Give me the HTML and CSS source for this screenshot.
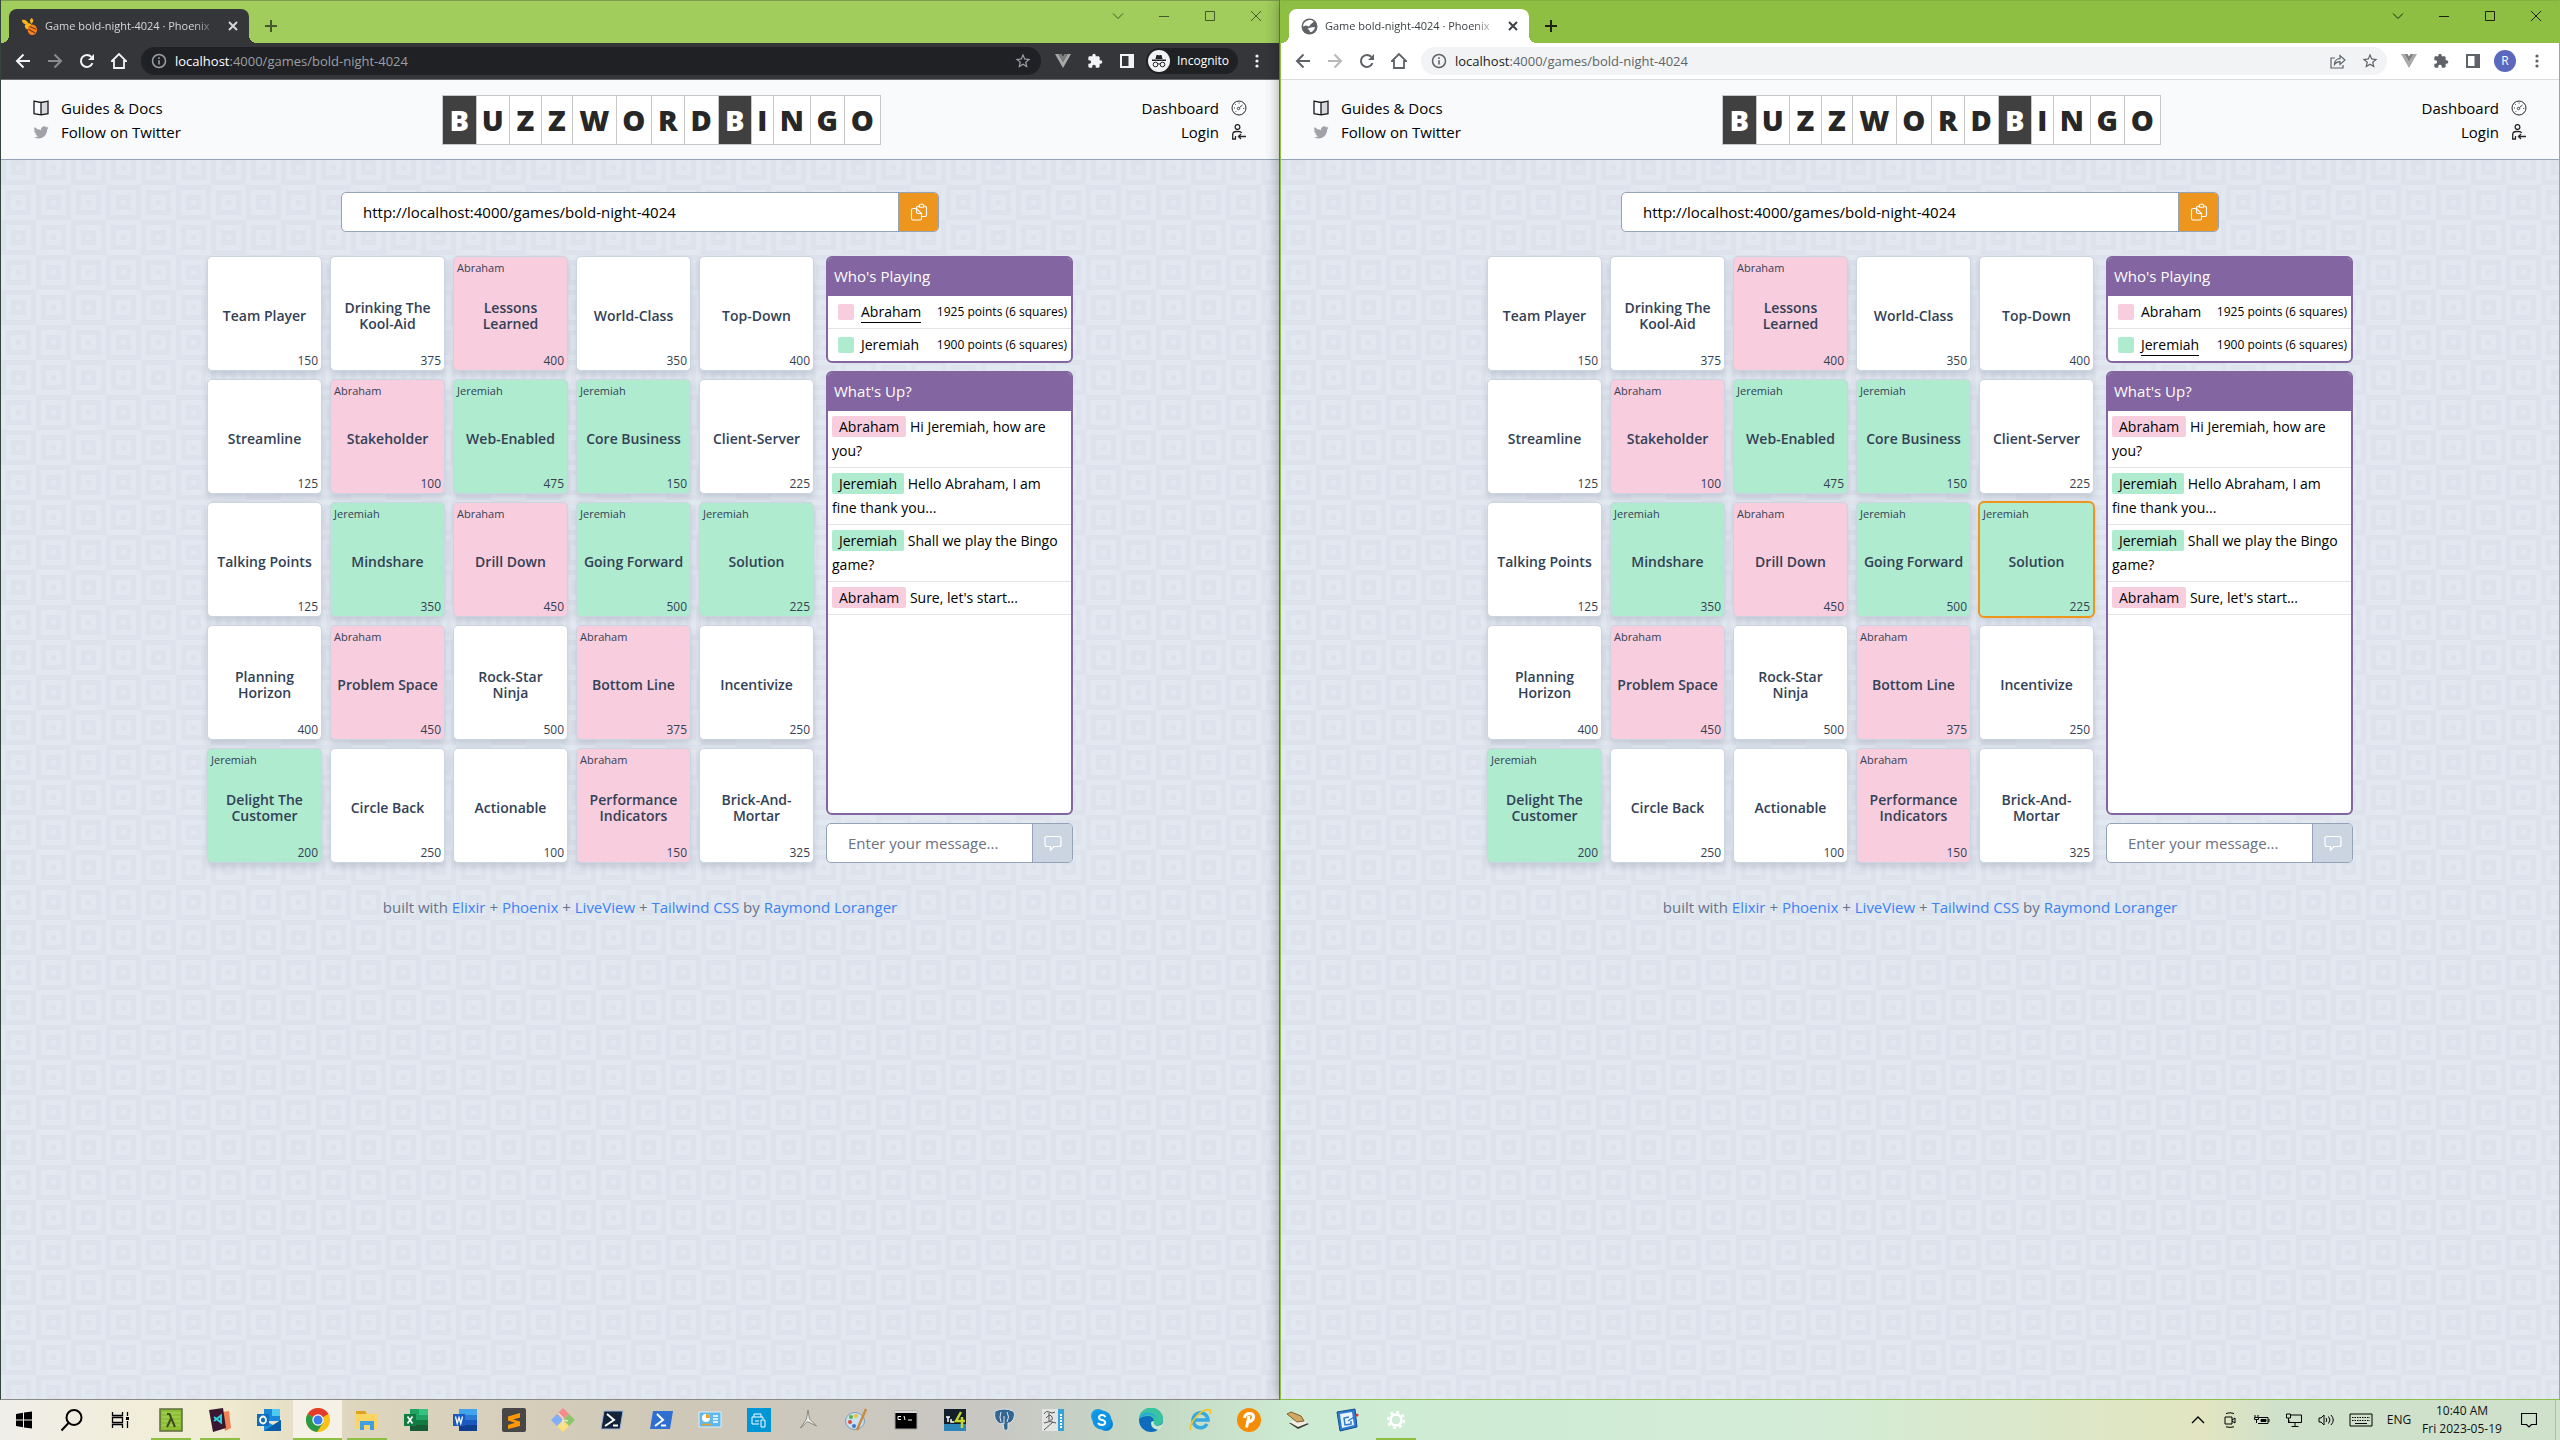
FILE: index.html
```html
<!DOCTYPE html>
<html lang="en">
<head>
<meta charset="utf-8">
<title>Game bold-night-4024 · Phoenix</title>
<link rel="stylesheet" href="styles.css">
<script src="app.js" defer></script>
</head>
<body>
<svg class="defs" aria-hidden="true">
  <symbol id="i-close" viewBox="0 0 16 16"><path d="M4 4l8 8M12 4l-8 8" fill="none" stroke="currentColor" stroke-width="2"/></symbol>
  <symbol id="i-plus" viewBox="0 0 16 16"><path d="M8 2v12M2 8h12" fill="none" stroke="currentColor" stroke-width="2"/></symbol>
  <symbol id="i-caret" viewBox="0 0 16 16"><path d="M3 5.500l5 5 5-5" fill="none" stroke="currentColor"/></symbol>
  <symbol id="i-min" viewBox="0 0 16 16"><path d="M3 8.500h10" fill="none" stroke="currentColor"/></symbol>
  <symbol id="i-max" viewBox="0 0 16 16"><path d="M3.500 3.500h9v9h-9z" fill="none" stroke="currentColor"/></symbol>
  <symbol id="i-x" viewBox="0 0 16 16"><path d="M3 3l10 10M13 3L3 13" fill="none" stroke="currentColor"/></symbol>
  <symbol id="i-back" viewBox="0 0 16 16"><path d="M15 8H2M8.500 1.500L2 8l6.500 6.500" fill="none" stroke="currentColor" stroke-width="2"/></symbol>
  <symbol id="i-fwd" viewBox="0 0 16 16"><path d="M1 8h13M7.500 1.500L14 8l-6.500 6.500" fill="none" stroke="currentColor" stroke-width="2"/></symbol>
  <symbol id="i-reload" viewBox="0 0 16 16"><path d="M13.500 10.200A6 6 0 1 1 12.400 3.900" fill="none" stroke="currentColor" stroke-width="2"/><path d="M15 1v6H9z" fill="currentColor"/></symbol>
  <symbol id="i-home" viewBox="0 0 16 16"><path d="M1 8L8 1l7 7h-2v7H3V8z" fill="none" stroke="currentColor" stroke-width="1.800"/></symbol>
  <symbol id="i-info" viewBox="0 0 16 16"><circle cx="8" cy="8" r="6.500" fill="none" stroke="currentColor" stroke-width="1.500"/><path d="M8 7.200V11.500M8 4.300V6" stroke="currentColor" stroke-width="1.600"/></symbol>
  <symbol id="i-star" viewBox="0 0 24 24"><path fill="currentColor" d="M22 9.240l-7.190-.62L12 2 9.190 8.630 2 9.240l5.460 4.730L5.820 21 12 17.270 18.180 21l-1.630-7.030L22 9.240zM12 15.400l-3.760 2.270 1-4.280-3.320-2.880 4.380-.38L12 6.100l1.710 4.040 4.380.38-3.320 2.880 1 4.280L12 15.400z"/></symbol>
  <symbol id="i-share" viewBox="0 0 16 16"><path d="M5 5H1v10h12v-3M4.500 11.500C4.500 7.500 7 5.700 10 5.700V2.500l5 4.500-5 4.500V8.600C7.500 8.600 6 9.300 4.500 11.500z" fill="none" stroke="currentColor" stroke-width="1.200"/></symbol>
  <symbol id="i-vue" viewBox="0 0 16 16"><path d="M0 1h3.500L8 9l4.500-8H16L8 15z" fill="#a9a9a9"/><path d="M3.500 1h3L8 3.500 9.500 1h3L8 9z" fill="#7f7f7f"/></symbol>
  <symbol id="i-puzzle" viewBox="0 0 24 24"><path fill="currentColor" d="M20.500 11H19V7c0-1.100-.9-2-2-2h-4V3.500a2.500 2.500 0 0 0-5 0V5H4c-1.100 0-2 .9-2 2v3.800h1.500a2.700 2.700 0 0 1 0 5.400H2V20c0 1.100.9 2 2 2h3.800v-1.500a2.700 2.700 0 0 1 5.400 0V22H17c1.100 0 2-.9 2-2v-4h1.500a2.500 2.500 0 0 0 0-5z"/></symbol>
  <symbol id="i-panel" viewBox="0 0 16 16"><path fill="currentColor" fill-rule="evenodd" d="M1 1h14v14H1zM3 3v10h6.500V3z"/></symbol>
  <symbol id="i-dots" viewBox="0 0 16 16"><circle cx="8" cy="3" r="1.600" fill="currentColor"/><circle cx="8" cy="8" r="1.600" fill="currentColor"/><circle cx="8" cy="13" r="1.600" fill="currentColor"/></symbol>
  <symbol id="i-spy" viewBox="0 0 22 22"><circle cx="11" cy="11" r="11" fill="#f1f3f4"/><path d="M7.500 9l1-4h1.500l1 .5 1-.5h1.500l1 4zM4 9.500h14v1.500H4z" fill="#202124"/><circle cx="7.500" cy="14.500" r="2.300" fill="none" stroke="#202124"/><circle cx="14.500" cy="14.500" r="2.300" fill="none" stroke="#202124"/><path d="M9.800 14.200q1.200-.8 2.400 0" stroke="#202124" fill="none"/></symbol>
  <symbol id="i-bee" viewBox="0 0 18 18"><path d="M1 2c3-1 6 1 7 4-3 1-7 0-7-4z" fill="#fbb51a"/><path d="M11 0c3 1 2 5 0 6-2-2-2-4 0-6z" fill="#fbb51a"/><path d="M4 8c1-3 5-3 7-1-1 2-3 3-4 5-2 0-3-2-3-4z" fill="#fbb51a"/><ellipse cx="12" cy="12.500" rx="5" ry="5.500" fill="#f7821b"/><path d="M9 9l7 3M8 12l7 4" stroke="#7a3b12" stroke-width="1.200"/></symbol>
  <symbol id="i-globe" viewBox="0 0 16 16"><circle cx="8" cy="8" r="7.500" fill="#5f6368"/><path d="M7 2c2-.5 4 0 5 1.500L9 6 7.500 8 4.500 7 2 8c0-3 2-5.500 5-6zM9 9l4-.5c0 2.500-2 4.700-4.500 5L8 11.500l-2-1.500z" fill="#fff"/></symbol>
  <symbol id="i-book" viewBox="0 0 16 16"><path d="M8 2.500l6.800-1.300v12.600L8 14.800z" fill="#d8d9dc"/><path d="M1 1.200l7 1.300 7-1.300v12.500L8 14.800l-7-1.100zM8 2.500v12.300" fill="none" stroke="#18181b" stroke-width="1.300"/></symbol>
  <symbol id="i-bird" viewBox="0 0 16 16"><path fill="#a1a1aa" d="M5.400 14.500c5.700 0 8.800-4.700 8.800-8.800v-.4c.6-.4 1.100-1 1.500-1.600-.6.300-1.200.4-1.800.5.600-.4 1.100-1 1.400-1.700-.6.400-1.300.6-2 .8a3.100 3.100 0 0 0-5.300 2.800A8.800 8.800 0 0 1 1.600 2.900a3.100 3.100 0 0 0 1 4.100c-.5 0-1-.2-1.400-.4 0 1.500 1.100 2.800 2.500 3.100-.5.100-.9.200-1.400.1.400 1.200 1.500 2.100 2.900 2.100A6.200 6.200 0 0 1 .6 13.100c1.400.9 3.100 1.400 4.800 1.400z"/></symbol>
  <symbol id="i-gauge" viewBox="0 0 16 16"><circle cx="8" cy="8" r="7" fill="none" stroke="#27272a"/><circle cx="7.500" cy="8.500" r="1.200" fill="none" stroke="#27272a" stroke-width=".8"/><path d="M8.500 7.500L11.500 5M8 2.500v1M3 8h1M12.200 8.500h1M4.300 4.300l.7.700M4.500 12l.7-.7" stroke="#27272a" stroke-width=".9"/></symbol>
  <symbol id="i-login" viewBox="0 0 16 16"><circle cx="6.500" cy="3" r="2.400" fill="none" stroke="#27272a" stroke-width="1.300"/><path d="M1.700 15v-4q0-3.500 3.500-3.500h2.600q2 0 3 1.500M4.500 15v-3M7.500 12.500H15M10 10l-2.500 2.500L10 15M1 15h4" fill="none" stroke="#27272a" stroke-width="1.300"/></symbol>
  <symbol id="i-copy" viewBox="0 0 18 18"><path d="M6.500 5V4.500q0-1.300 1.500-1.300h1.300M13.700 3.200H15q1.500 0 1.500 1.500v7.300q0 1.500-1.500 1.500h-3M9.300 2.500q0-1.200 1.200-1.200h2q1.200 0 1.200 1.200v1.700H9.300zM6.500 5.500H3Q1.500 5.500 1.500 7v8.500Q1.500 17 3 17h7q1.500 0 1.500-1.500v-5zM6.500 5.500V9q0 1.500 1.500 1.500h3.500" fill="none" stroke="#fff" stroke-width="1.100"/></symbol>
  <symbol id="i-chat" viewBox="0 0 18 18"><path d="M3 2.500h12q2 0 2 2v6q0 2-2 2H10l-3.500 3.500v-3.500H3q-2 0-2-2v-6q0-2 2-2z" fill="none" stroke="#fff" stroke-width="1.200"/></symbol>
</svg>

<main class="desktop">
  <section class="window incognito" data-me="Abraham">
    <div class="tabstrip">
      <div class="tab"><svg class="fav"><use href="#i-bee"/></svg><span class="tab-title">Game bold-night-4024 · Phoenix</span><button aria-label="Close tab"><svg><use href="#i-close"/></svg></button></div>
      <button class="new-tab" aria-label="New tab"><svg><use href="#i-plus"/></svg></button>
      <div class="win-controls">
        <button aria-label="Search tabs"><svg><use href="#i-caret"/></svg></button>
        <button aria-label="Minimize"><svg><use href="#i-min"/></svg></button>
        <button aria-label="Maximize"><svg><use href="#i-max"/></svg></button>
        <button aria-label="Close"><svg><use href="#i-x"/></svg></button>
      </div>
    </div>
    <div class="toolbar">
      <button aria-label="Back"><svg><use href="#i-back"/></svg></button>
      <button aria-label="Forward" class="dim"><svg><use href="#i-fwd"/></svg></button>
      <button aria-label="Reload"><svg><use href="#i-reload"/></svg></button>
      <button aria-label="Home"><svg><use href="#i-home"/></svg></button>
      <div class="omnibox"><svg><use href="#i-info"/></svg><span class="url"><b>localhost</b>:4000/games/bold-night-4024</span><button aria-label="Bookmark"><svg class="star"><use href="#i-star"/></svg></button></div>
      <button aria-label="Vue devtools"><svg><use href="#i-vue"/></svg></button>
      <button aria-label="Extensions"><svg><use href="#i-puzzle"/></svg></button>
      <button aria-label="Side panel"><svg><use href="#i-panel"/></svg></button>
      <button class="mode"><svg><use href="#i-spy"/></svg>Incognito</button>
      <button aria-label="Menu" class="menu"><svg><use href="#i-dots"/></svg></button>
    </div>
    <div class="app"></div>
  </section>

  <section class="window regular" data-me="Jeremiah" data-active="Solution">
    <div class="tabstrip">
      <div class="tab"><svg class="fav"><use href="#i-globe"/></svg><span class="tab-title">Game bold-night-4024 · Phoenix</span><button aria-label="Close tab"><svg><use href="#i-close"/></svg></button></div>
      <button class="new-tab" aria-label="New tab"><svg><use href="#i-plus"/></svg></button>
      <div class="win-controls">
        <button aria-label="Search tabs"><svg><use href="#i-caret"/></svg></button>
        <button aria-label="Minimize"><svg><use href="#i-min"/></svg></button>
        <button aria-label="Maximize"><svg><use href="#i-max"/></svg></button>
        <button aria-label="Close"><svg><use href="#i-x"/></svg></button>
      </div>
    </div>
    <div class="toolbar">
      <button aria-label="Back"><svg><use href="#i-back"/></svg></button>
      <button aria-label="Forward" class="dim"><svg><use href="#i-fwd"/></svg></button>
      <button aria-label="Reload"><svg><use href="#i-reload"/></svg></button>
      <button aria-label="Home"><svg><use href="#i-home"/></svg></button>
      <div class="omnibox"><svg><use href="#i-info"/></svg><span class="url"><b>localhost</b>:4000/games/bold-night-4024</span><button aria-label="Share"><svg><use href="#i-share"/></svg></button><button aria-label="Bookmark"><svg class="star"><use href="#i-star"/></svg></button></div>
      <button aria-label="Vue devtools"><svg><use href="#i-vue"/></svg></button>
      <button aria-label="Extensions"><svg><use href="#i-puzzle"/></svg></button>
      <button aria-label="Side panel"><svg><use href="#i-panel"/></svg></button>
      <button class="profile" aria-label="Profile"><span>R</span></button>
      <button aria-label="Menu" class="menu"><svg><use href="#i-dots"/></svg></button>
    </div>
    <div class="app"></div>
  </section>
</main>

<template id="game">
  <header class="nav">
    <nav class="links">
      <a href="#"><svg><use href="#i-book"/></svg>Guides &amp; Docs</a>
      <a href="#"><svg><use href="#i-bird"/></svg>Follow on Twitter</a>
    </nav>
    <h1 class="logo"><span class="inv">B</span><span>U</span><span>Z</span><span>Z</span><span>W</span><span>O</span><span>R</span><span>D</span><span class="inv">B</span><span>I</span><span>N</span><span>G</span><span>O</span></h1>
    <nav class="links end">
      <a href="#">Dashboard<svg><use href="#i-gauge"/></svg></a>
      <a href="#">Login<svg><use href="#i-login"/></svg></a>
    </nav>
  </header>
  <div class="content">
    <form class="field share">
      <input type="text" value="http://localhost:4000/games/bold-night-4024" aria-label="Game link" readonly>
      <button type="button" aria-label="Copy link"><svg><use href="#i-copy"/></svg></button>
    </form>
    <div class="game">
      <div class="board"></div>
      <aside class="side">
        <section class="panel">
          <h2>Who's Playing</h2>
          <ul class="players">
            <li><i class="swatch pink"></i><span class="player">Abraham</span><span class="score">1925 points (6 squares)</span></li>
            <li><i class="swatch green"></i><span class="player">Jeremiah</span><span class="score">1900 points (6 squares)</span></li>
          </ul>
        </section>
        <section class="panel chat">
          <h2>What's Up?</h2>
          <ul class="messages">
            <li><span class="chip pink">Abraham</span> Hi Jeremiah, how are you?</li>
            <li><span class="chip green">Jeremiah</span> Hello Abraham, I am fine thank you...</li>
            <li><span class="chip green">Jeremiah</span> Shall we play the Bingo game?</li>
            <li><span class="chip pink">Abraham</span> Sure, let's start...</li>
          </ul>
        </section>
        <form class="field message">
          <input type="text" placeholder="Enter your message..." aria-label="Message">
          <button type="button" aria-label="Send"><svg><use href="#i-chat"/></svg></button>
        </form>
      </aside>
    </div>
    <footer class="credits">built with <a href="#">Elixir</a> + <a href="#">Phoenix</a> + <a href="#">LiveView</a> + <a href="#">Tailwind CSS</a> by <a href="#">Raymond Loranger</a></footer>
  </div>
</template>

<footer class="taskbar">
  <div class="system">
    <button aria-label="Start"><svg viewBox="0 0 24 24"><path d="M4 6l7-1.200v6.700H4zM12 4.600L20 3.500v8h-8zM4 12.500h7v6.700L4 18zM12 12.500h8v8l-8-1.100z"/></svg></button>
    <button aria-label="Search"><svg viewBox="0 0 24 24"><g fill="none" stroke="#000" stroke-width="2"><circle cx="14" cy="9.500" r="7.500"/><path d="M8.500 15L1.500 22.500"/></g></svg></button>
    <button aria-label="Task view"><svg viewBox="0 0 24 24"><path d="M4.500 4v3.500h10V4M4.500 20v-3.500h10V20M4.500 9.500h10v5h-10zM19.500 4v4M19.500 13v7" fill="none" stroke="#000" stroke-width="1.300"/><path d="M18 9h3v3h-3z"/></svg></button>
  </div>
  <div class="apps">
    <button class="open" aria-label="Cmder"><svg viewBox="0 0 24 24"><path fill="#8dbf35" stroke="#5d6b3d" stroke-width="1.500" d="M1 1h22v22H1z"/><path d="M3 5h18M3 9h18M3 13h18M3 17h18" stroke="#a9d65a"/><path d="M8 6h2.500l5.500 13M11.800 11L8 19" fill="none" stroke="#3f4a25" stroke-width="2"/></svg></button>
    <button class="open" aria-label="VS Code"><svg viewBox="0 0 24 24"><path fill="#ef8354" d="M14 4l7-1 2 17-6 3z"/><path fill="#3a1730" d="M1 2l14-2 3 20-13 4z"/><path d="M6 9l7 5.500V7.500L6 13" fill="none" stroke="#2bd4e0" stroke-width="1.900"/></svg></button>
    <button aria-label="Outlook"><svg viewBox="0 0 24 24"><path fill="#1a86d9" d="M7 1h16v12H7z"/><path fill="#50c8f4" d="M15 1h8v7h-8z"/><path fill="#1490df" d="M7 12l9 5 8-5v11H7z"/><path fill="#0a5ca8" d="M7 23l17-11v11z"/><path fill="#0f6cbd" d="M0 6h12v12H0z"/><ellipse cx="6" cy="12" rx="3" ry="3.500" fill="none" stroke="#fff" stroke-width="1.800"/></svg></button>
    <button class="open current" aria-label="Chrome"><svg viewBox="0 0 24 24"><circle cx="12" cy="12" r="12" fill="#fbc116"/><path fill="#e33b2e" d="M12 12L1.600 6a12 12 0 0 1 20.800 0z"/><path fill="#2b9a47" d="M12 12L1.600 6a12 12 0 0 0 9.400 18l6-9z"/><circle cx="12" cy="12" r="5.700" fill="#fff"/><circle cx="12" cy="12" r="4.500" fill="#3b7ded"/></svg></button>
    <button class="open" aria-label="File Explorer"><svg viewBox="0 0 24 24"><path fill="#e0a11b" d="M1 3h9l2 3H1z"/><path fill="#fcd462" d="M1 6h22v15H1z"/><path fill="#3f9fe0" d="M5 22v-9h14v9h-4v-5H9v5z"/></svg></button>
    <button aria-label="Excel"><svg viewBox="0 0 24 24"><path fill="#21a366" d="M6 1h18v22H6z"/><path fill="#33c481" d="M15 1h9v6h-9z"/><path fill="#107c41" d="M6 12h18v6H6z"/><path fill="#185c37" d="M6 17h18v6H6z"/><path fill="#107c41" d="M0 6h12v12H0z"/><path d="M3.500 8.500l5 7M8.500 8.500l-5 7" stroke="#fff" stroke-width="1.700"/></svg></button>
    <button aria-label="Word"><svg viewBox="0 0 24 24"><path fill="#41a5ee" d="M6 1h18v6H6z"/><path fill="#2b7cd3" d="M6 7h18v6H6z"/><path fill="#185abd" d="M6 12h18v6H6z"/><path fill="#103f91" d="M6 17h18v6H6z"/><path fill="#185abd" d="M0 6h12v12H0z"/><path d="M2.500 8.500l1.700 7L6 9.500l1.800 6 1.700-7" fill="none" stroke="#fff" stroke-width="1.300"/></svg></button>
    <button aria-label="Sublime Text"><svg viewBox="0 0 24 24"><rect width="24" height="24" rx="2" fill="#474747"/><path fill="#ff9800" d="M6 8.500L18 5v4.500L11 11.500l7 2V18L6 21v-4l7-2.200-7-2.300z"/></svg></button>
    <button aria-label="Git"><svg viewBox="0 0 24 24"><path fill="#f68b8b" d="M12 0l6 6-6 6-6-6z"/><path fill="#8cc56b" d="M18 6l6 6-6 6-6-6z"/><path fill="#fbe07a" d="M12 12l6 6-6 6-6-6z"/><path fill="#83adf5" d="M6 6l6 6-6 6-6-6z"/><path d="M7 5l5 5v9M12 12l5 1" stroke="#e9e3d2" stroke-width="1.500" fill="none"/></svg></button>
    <button aria-label="PowerShell 7"><svg viewBox="0 0 24 24"><path fill="#13233b" stroke="#9db8dc" d="M4 3h19l-3 18H1z"/><path d="M7 6l7 6-9 6M13 17.500h5" fill="none" stroke="#fff" stroke-width="2"/></svg></button>
    <button aria-label="PowerShell"><svg viewBox="0 0 24 24"><path fill="#2f6fd0" d="M4 3h20l-3 18H1z"/><path d="M8 6l6 6-8 6M12 17.500h5" fill="none" stroke="#fff" stroke-width="2"/></svg></button>
    <button aria-label="Dashboard"><svg viewBox="0 0 24 24"><path fill="#5fb9ea" stroke="#dceffa" d="M1 4h22v15H1z"/><circle cx="8" cy="10" r="4" fill="#fff"/><path fill="#f0a020" d="M8 10V6a4 4 0 0 1 4 4z"/><path d="M15 8h5M15 11h5M15 14h5" stroke="#fff" stroke-width="1.300"/><path d="M4 16.500h9" stroke="#f0a020" stroke-width="1.500"/></svg></button>
    <button aria-label="Scanner"><svg viewBox="0 0 24 24"><path fill="#0096d6" d="M0 0h24v24H0z"/><path d="M5 9h11v2M5 9v7h7M7 9V6h7v3M8 13h4M14 12h4v7h-4z" fill="none" stroke="#fff"/></svg></button>
    <button aria-label="Turbine"><svg viewBox="0 0 24 24"><path d="M12 2l1.500 9 7 7-9-4.500-7 6.500 6-9z" fill="#f1f1ee" stroke="#74746c" stroke-width=".8"/></svg></button>
    <button aria-label="Paint"><svg viewBox="0 0 24 24"><ellipse cx="10" cy="13" rx="9.500" ry="8.500" fill="#c9e0ee" stroke="#7f9cb4"/><circle cx="6" cy="9" r="2" fill="#5aae3f"/><circle cx="5" cy="14" r="2" fill="#e2463c"/><circle cx="11" cy="8" r="2" fill="#f2c12e"/><circle cx="9" cy="18" r="2" fill="#3f77cf"/><path d="M21 1L12 22" stroke="#c98a45" stroke-width="2.500"/></svg></button>
    <button aria-label="Command Prompt"><svg viewBox="0 0 24 24"><path d="M1 3h22v18H1z" stroke="#a3a3a3"/><path d="M1 3h22v2H1z" fill="#d8d8d8"/><path d="M7 8.500H4v3h3M10 8l1 4M14 12h4" fill="none" stroke="#fff"/></svg></button>
    <button aria-label="Tuck 4"><svg viewBox="0 0 24 24"><path fill="#13202b" d="M1 1h22v22H1z"/><path fill="#2c86b8" d="M1 16h22v7H1z"/><path d="M18 4l-5 9h9M19 9v11" stroke="#c5d62a" stroke-width="2.500" fill="none"/><path d="M3 9h4M5 9v5M8 11v3h3" stroke="#fff" stroke-width="1.500" fill="none"/></svg></button>
    <button aria-label="PostgreSQL"><svg viewBox="0 0 24 24"><path fill="#336791" stroke="#dbe3ea" d="M3 3q9-4 18 0 3 3 0 9l-3 3-2 0v6q-1 2-4 1l-1-7-3 1Q1 12 3 3z"/><path d="M9 4q-2 5 0 10M15 4q3 5 0 10M12 8v8" fill="none" stroke="#dbe3ea"/></svg></button>
    <button aria-label="Tuck sketch"><svg viewBox="0 0 24 24"><path fill="#e4e4e4" d="M1 1h22v22H1z"/><path fill="#35a3d8" d="M17 1h6v22h-6z"/><path d="M3 6q2-4 5-2t6 0M5 10q4-5 6-1t-4 3M8 5v6M3 15q6-3 12 0M3 22l9-8" fill="none" stroke="#555"/><path d="M20 6v14" stroke="#fff" stroke-width="2" stroke-dasharray="2 1"/></svg></button>
    <button aria-label="Skype"><svg viewBox="0 0 24 24"><circle cx="8" cy="8" r="7" fill="#0f9ce8"/><circle cx="16" cy="16" r="7" fill="#0a84d8"/><circle cx="12" cy="12" r="9.500" fill="#0f94e4"/><path d="M15.500 9q-1-2-3.500-2t-3 2.200Q9 11.500 12 12t3.200 2.500Q15 17 12 17t-4-2" fill="none" stroke="#fff" stroke-width="2"/></svg></button>
    <button aria-label="Edge"><svg viewBox="0 0 24 24"><circle cx="12" cy="12" r="12" fill="#0f6cbd"/><path fill="#39c4a0" d="M0 11a12 12 0 0 1 24 1c0 4-4 6-8 5-2-.5-1-2-1-4 0-3-3-5-6-5-4 0-7 1-9 3z"/><path fill="#2ba8e0" d="M0 11Q3 3 12 5q5 1 6 6-4-5-9-4-5 0-9 4z"/><path fill="#c9e6cf" d="M15 13q-1 3 2 4.500 4 1 7-2.500-1 5-4 7-8-1-8-7 0-2 3-2z"/></svg></button>
    <button aria-label="Internet Explorer"><svg viewBox="0 0 24 24"><path d="M19 16a7.500 7.500 0 1 1 1-4H6" fill="none" stroke="#36a9e1" stroke-width="3.500"/><path d="M3 22C-1 17 14-1 22 2q1 1 0 4" fill="none" stroke="#f3c325" stroke-width="1.800"/></svg></button>
    <button aria-label="Pexels"><svg viewBox="0 0 24 24"><circle cx="12" cy="12" r="12" fill="#f48c06"/><path d="M9.500 19.500L12 8M7.500 10Q8 5.500 13 5.500q4 .5 3.500 4T11 14" fill="none" stroke="#fff" stroke-width="3"/></svg></button>
    <button aria-label="Stamp"><svg viewBox="0 0 24 24"><path fill="#3b3b36" d="M3 15l12-3 8 4-11 5z"/><path fill="#f0eee2" d="M3 14l11-3 8 4-10 4z"/><path fill="#d3a764" stroke="#80602e" d="M1 6l4-2 10 4 3 5-7 1z"/></svg></button>
    <button aria-label="Notes"><svg viewBox="0 0 24 24"><path fill="#2d7cd1" stroke="#164d8c" d="M2 4L20 1l2 18-17 4z"/><path fill="#eaf4fc" d="M5 6l12-2 2 13-12 3z"/><path d="M14 9l-5 1 1 7 6-1v-3M22 7l-9 6" fill="none" stroke="#2d7cd1" stroke-width="1.500"/><circle cx="22" cy="7" r="1.500" fill="#d33"/></svg></button>
    <button class="open" aria-label="Settings"><svg viewBox="0 0 24 24"><circle cx="12" cy="12" r="5.500" fill="none" stroke="#fff" stroke-width="2.500"/><circle cx="12" cy="12" r="8" fill="none" stroke="#fff" stroke-width="2.500" stroke-dasharray="3 3.280"/></svg></button>
  </div>
  <div class="tray">
    <button aria-label="Hidden icons"><svg viewBox="0 0 16 16"><path d="M2 11l6-6 6 6" stroke-width="1.400"/></svg></button>
    <button aria-label="Meet now"><svg viewBox="0 0 16 16"><path d="M3 5h7v7H3zM10 8l3-2v5l-3-2M4 1.500q4-1.500 8 0M4 14.800q4 1.200 8 0"/></svg></button>
    <button aria-label="Battery"><svg viewBox="0 0 16 16"><path d="M5 5.500h9v6H4M15 7v3M1 3v2.500M4 3v2.500M.5 5.500h4v2h-4zM2.500 8v3"/><path class="solid" d="M7 7.500h5v2H7z"/></svg></button>
    <button aria-label="Network"><svg viewBox="0 0 16 16"><path d="M5 3h10.500v7.500H3V8M9 10.500V14M5.500 14.500h7M.5 2h4v4h-4zM2.500 6v5"/></svg></button>
    <button aria-label="Volume"><svg viewBox="0 0 16 16"><path d="M1 6h2l3-3v10l-3-3H1zM8 6q1.500 2 0 4M10.500 4.500q3 3.500 0 7M13 3q4.500 5 0 10"/></svg></button>
    <button aria-label="Touch keyboard" class="kbd"><svg viewBox="0 0 24 16"><path d="M1 2h22v12H1z"/><path d="M3 5.500h18M3 8.500h18" stroke-dasharray="1.500 1"/><path d="M6 11.500h12"/></svg></button>
    <button class="lang">ENG</button>
    <button class="clock"><span>10:40 AM</span><span>Fri 2023-05-19</span></button>
    <button aria-label="Notifications" class="notif"><svg viewBox="0 0 16 16"><path d="M.5 1.500h15v11H10.500L8 15l-2.500-2.500H.5z" stroke-width="1.200"/></svg></button>
  </div>
</footer>
</body>
</html>
```

FILE: app.js
```javascript
const squares = [
  ["Team Player", 150], ["Drinking The Kool-Aid", 375], ["Lessons Learned", 400, "Abraham"], ["World-Class", 350], ["Top-Down", 400],
  ["Streamline", 125], ["Stakeholder", 100, "Abraham"], ["Web-Enabled", 475, "Jeremiah"], ["Core Business", 150, "Jeremiah"], ["Client-Server", 225],
  ["Talking Points", 125], ["Mindshare", 350, "Jeremiah"], ["Drill Down", 450, "Abraham"], ["Going Forward", 500, "Jeremiah"], ["Solution", 225, "Jeremiah"],
  ["Planning Horizon", 400], ["Problem Space", 450, "Abraham"], ["Rock-Star Ninja", 500], ["Bottom Line", 375, "Abraham"], ["Incentivize", 250],
  ["Delight The Customer", 200, "Jeremiah"], ["Circle Back", 250], ["Actionable", 100], ["Performance Indicators", 150, "Abraham"], ["Brick-And-Mortar", 325]
];
const colors = { Abraham: "pink", Jeremiah: "green" };
const part = (cls, text) => {
  const span = document.createElement("span");
  span.className = cls;
  span.textContent = text;
  return span;
};

for (const win of document.querySelectorAll(".window")) {
  const app = win.querySelector(".app");
  app.append(document.getElementById("game").content.cloneNode(true));
  const board = app.querySelector(".board");
  for (const [phrase, points, owner = ""] of squares) {
    const square = document.createElement("button");
    square.className = "square " + (colors[owner] || "");
    if (phrase === win.dataset.active) square.classList.add("active");
    square.append(part("owner", owner), part("phrase", phrase), part("points", points));
    board.append(square);
  }
  for (const player of app.querySelectorAll(".player")) {
    if (player.textContent === win.dataset.me) player.classList.add("me");
  }
}
```

FILE: styles.css
```css
* { box-sizing: border-box; }
body {
  margin: 0;
  min-height: 100vh;
  display: flex;
  flex-direction: column;
  font: 15px/24px "Open Sans", "Noto Sans", sans-serif;
  color: #000;
}
button, input { font: inherit; color: inherit; border: 0; background: none; padding: 0; margin: 0; }
button { cursor: pointer; }
ul { list-style: none; margin: 0; padding: 0; }
h1, h2 { margin: 0; font: inherit; }
a { color: inherit; text-decoration: none; }
svg { display: block; width: 16px; height: 16px; }
.defs { position: absolute; width: 0; height: 0; }
.pink { background: #f8cddd; }
.green { background: #afebcf; }

/* Browser windows */
.desktop { flex: 1; display: grid; grid-template-columns: 1fr 1fr; }
.window { display: flex; flex-direction: column; min-width: 0; border: solid #33453c; border-width: 0 1px 1px; border-right-color: #6f8f45; border-bottom-color: #8a8a86; }
.regular { border-color: #8fbf42; box-shadow: 0 0 14px rgba(0, 0, 0, .4); clip-path: inset(0 0 0 -14px); }
.tabstrip { display: flex; height: 43px; background: #a0cd5c; border-top: 1px solid #7f9d52; padding: 8px 0 0 8px; color: #45592a; }
.regular .tabstrip { background: #8fbf42; border-color: #84b13c; color: #1b2310; }
.tab {
  position: relative; width: 240px; display: flex; align-items: center; gap: 7px; padding: 0 8px 0 12px;
  background: #35363a; color: #d5d7da; border-radius: 8px 8px 0 0; font-size: 11px; line-height: 16px;
}
.tab::before, .tab::after { content: ""; position: absolute; bottom: 0; width: 8px; height: 8px; }
.tab::before { right: 100%; background: radial-gradient(circle at 0 0, transparent 8px, #35363a 8px); }
.tab::after { left: 100%; background: radial-gradient(circle at 100% 0, transparent 8px, #35363a 8px); }
.regular .tab { background: #fff; color: #3c4043; }
.regular .tab::before { background: radial-gradient(circle at 0 0, transparent 8px, #fff 8px); }
.regular .tab::after { background: radial-gradient(circle at 100% 0, transparent 8px, #fff 8px); }
.fav { width: 17px; height: 17px; flex: none; }
.tab-title { flex: 1; white-space: nowrap; mask-image: linear-gradient(90deg, #000 86%, transparent); }
.new-tab { margin-left: 14px; }
.tabstrip .new-tab { align-self: center; }
.win-controls { margin-left: auto; display: flex; align-self: flex-start; height: 14px; align-items: center; }
.win-controls button { width: 46px; display: grid; place-items: center; }

.toolbar { display: flex; align-items: center; height: 37px; background: #35363a; border-bottom: 1px solid #6a6b6e; padding: 0 6px; color: #f1f3f4; }
.regular .toolbar { background: #fff; border-color: #dadce0; color: #5f6368; }
.toolbar > button { width: 32px; height: 32px; display: grid; place-items: center; flex: none; }
.dim { opacity: .45; }
.omnibox {
  flex: 1; height: 28px; margin: 0 6px; padding: 0 2px 0 10px; display: flex; align-items: center; gap: 8px;
  border-radius: 14px; background: #202124; color: #9aa0a6; font-size: 13px; line-height: 20px;
}
.regular .omnibox { background: #f1f3f4; color: #5f6368; padding-right: 5px; }
.url { flex: 1; }
.url b { font-weight: 400; color: #fff; }
.regular .url b { color: #202124; }
.omnibox button { width: 24px; display: grid; place-items: center; }
.incognito .omnibox button { width: 32px; }
.star { width: 18px; height: 18px; }
.toolbar .mode { width: 92px; height: 26px; margin: 0 3px; border-radius: 13px; background: #202124; color: #fff; display: flex; align-items: center; gap: 7px; padding: 0 2px; font-size: 12px; }
.mode svg { width: 22px; height: 22px; }
.profile span { display: grid; place-items: center; width: 22px; height: 22px; border-radius: 50%; background: #5b68bd; color: #fff; font-size: 12px; line-height: 16px; }

/* Game page */
.app {
  flex: 1;
  background: #e2e8f0 url("data:image/svg+xml,%3Csvg xmlns='http://www.w3.org/2000/svg' width='70' height='70'%3E%3Cpath fill='%23dde2ec' fill-rule='evenodd' d='M0 0h35v35H0zM5 5v25h25V5zM10 10h15v15H10zM15 15v5h5v-5zM35 35h35v35H35zM40 40v25h25V40zM45 45h15v15H45zM50 50v5h5v-5zM40 5h25v25H40zM45 10v15h15V10zM50 15h5v5h-5zM5 40h25v25H5zM10 45v15h15V45zM15 50h5v5h-5z'/%3E%3C/svg%3E");
}
.nav { display: flex; justify-content: space-between; align-items: center; height: 80px; padding: 0 32px; background: #f8fafc; border-bottom: 1px solid #94a3b8; }
.links { display: flex; flex-direction: column; }
.links a { display: flex; align-items: center; gap: 12px; }
.end { align-items: flex-end; }
.logo {
  display: grid; grid-template-columns: 33px 33px 32px 31px 44px 35px 33px 34px 33px 22px 37px 34px 36px;
  border: 1px solid #c8c8c8; background: #fff; color: #272727; font: 800 29px/48px "Open Sans", sans-serif; text-align: center;
}
.logo span + span { border-left: 1px solid #c8c8c8; }
.logo .inv { background: #404040; color: #fff; }
.content { display: flex; flex-direction: column; align-items: center; padding: 32px 16px; }
.field { display: flex; height: 40px; border: 1px solid #94a3b8; border-radius: 5px; overflow: hidden; background: #fff; }
.field input { flex: 1; min-width: 0; padding: 0 21px; outline: 0; }
.field input::placeholder { color: #6b7280; opacity: 1; }
.field button { width: 40px; border-left: 1px solid #94a3b8; display: grid; place-items: center; }
.field svg { width: 18px; height: 18px; }
.share { width: 598px; }
.share button { background: #ed951c; }
.message button { background: #cbd5e1; }
.game { display: flex; gap: 12px; margin: 24px 0 32px; }
.board { display: grid; grid-template-columns: repeat(5, 115px); grid-auto-rows: 115px; gap: 8px; }
.square {
  display: grid; grid-template-rows: 20px 1fr 18px; padding: 2px 3px 0; border: 1px solid #cbd5e1; border-radius: 5px;
  background: #fff; color: #334155; box-shadow: 0 4px 6px rgba(51, 65, 85, .16); font-size: 12px; line-height: 18px;
}
.square.pink { background: #f8cddd; }
.square.green { background: #afebcf; }
.square.active { outline: 2px solid #ed951c; outline-offset: -1px; }
.owner { text-align: left; font-size: 11px; }
.phrase { align-self: center; font-size: 14px; line-height: 16px; font-weight: 600; margin: 0 2px; }
.points { text-align: right; }
.side { width: 247px; display: flex; flex-direction: column; gap: 8px; }
.panel { border: 2px solid #8265a1; border-radius: 6px; background: #fff; overflow: hidden; }
.panel h2 { height: 38px; padding: 6px; background: #8265a1; color: #fff; }
.chat { flex: 1; }
.players li { display: flex; align-items: center; padding: 4px 4px 4px 10px; height: 32px; }
.players li + li { border-top: 1px solid #e4e4e7; height: 33px; }
.swatch { width: 16px; height: 16px; border-radius: 2px; margin-right: 7px; }
.player { line-height: 20px; font-size: 14px; }
.me { border-bottom: 1px solid #000; }
.score { margin-left: auto; font-size: 12px; }
.messages li { padding: 4px; border-bottom: 1px solid #e4e4e7; font-size: 14px; }
.chip { padding: 1px 7px; border-radius: 2px; }
.credits { color: #64748b; }
.credits a { color: #3b82f6; }

/* Taskbar */
.taskbar {
  display: flex; height: 40px;
  background: linear-gradient(90deg, #f0eee9 0, #f1edd3 8%, #ded5bd 14%, #cfc8b8 26%, #c8c7c3 39%, #c5d9c5 45%, #cdebd3 51%, #d3ecd8 70%, #e2e5c0 86%, #cfe1cb 89%, #cfe1cb 100%);
}
.taskbar button { display: grid; place-items: center; }
.system, .apps, .tray { display: flex; }
.system button { width: 48px; }
.system { margin-right: 2px; }
.apps button { width: 49px; border: solid transparent; border-width: 2px 0; }
.apps svg, .system svg { width: 24px; height: 24px; }
.apps .open { background: linear-gradient(#8dbf42, #8dbf42) center bottom / 40px 2px no-repeat border-box; }
.apps .current { background: linear-gradient(#8dbf42, #8dbf42) center bottom / 100% 2px no-repeat border-box, #f5f1e7; }
.tray { margin-left: auto; padding-right: 4px; }
.tray button { width: 32px; font-size: 12px; line-height: 18px; color: #111; }
.tray svg { fill: none; stroke: #000; }
.tray .solid { fill: #000; }
.tray .kbd { width: 38px; }
.kbd svg { width: 24px; }
.tray .lang { width: 38px; }
.tray .clock { width: 88px; align-content: center; }
.tray .notif { width: 50px; padding-right: 4px; border-right: 1px solid #aebfae; }
```
